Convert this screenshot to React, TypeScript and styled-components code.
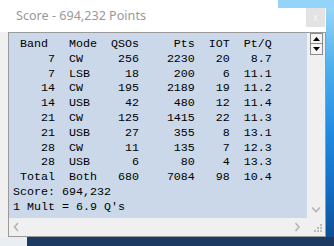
import React from 'react';
import styled, {createGlobalStyle} from "styled-components";

const GlobalStyle = createGlobalStyle`
    html, body {
        margin: 0;
        padding: 0;
        background: #1d3b63;
    }
`

type Line = [string, string, string, string, string, string];

const header: Line = ["Band ", "Mode", "QSOs", "Pts", "IOT", "Pt/Q"];

const rows: Line[] = [
    ["7", "CW", "256", "2230", "20", "8.7"],
    ["7", "LSB", "18", "200", "6", "11.1"],
    ["14", "CW", "195", "2189", "19", "11.2"],
    ["14", "USB", "42", "480", "12", "11.4"],
    ["21", "CW", "125", "1415", "22", "11.3"],
    ["21", "USB", "27", "355", "8", "13.1"],
    ["28", "CW", "11", "135", "7", "12.3"],
    ["28", "USB", "6", "80", "4", "13.3"],
    ["Total", "Both", "680", "7084", "98", "10.4"],
];

const Chevron = ({dir}: { dir: "left" | "right" | "down" }) => {
    const d = dir === "down" ? "M1 1.5 L5 5.5 L9 1.5" : dir === "left" ? "M5 1 L1.5 5 L5 9" : "M1.5 1 L5 5 L1.5 9";
    const w = dir === "down" ? 10 : 7;
    const h = dir === "down" ? 7 : 10;
    return (
        <svg width={w} height={h} viewBox={`0 0 ${w} ${h}`}>
            <path d={d} fill="none" stroke="#b4b4b4" strokeWidth="1.6"/>
        </svg>
    );
};

const Grip = () => (
    <svg width="8" height="8" viewBox="0 0 8 8">
        <rect x="6" y="0" width="2" height="2" fill="#bdbdbd"/>
        <rect x="3" y="3" width="2" height="2" fill="#bdbdbd"/>
        <rect x="6" y="3" width="2" height="2" fill="#bdbdbd"/>
        <rect x="0" y="6" width="2" height="2" fill="#bdbdbd"/>
        <rect x="3" y="6" width="2" height="2" fill="#bdbdbd"/>
        <rect x="6" y="6" width="2" height="2" fill="#bdbdbd"/>
    </svg>
);

const ScoreRow = ({line}: { line: Line }) => (
    <Row>
        <Cell>{line[0]}</Cell>
        <Cell align={"left"} pad={2}>{line[1]}</Cell>
        <Cell>{line[2]}</Cell>
        <Cell>{line[3]}</Cell>
        <Cell>{line[4]}</Cell>
        <Cell>{line[5]}</Cell>
    </Row>
);

export default function App() {
    return (
        <Desktop>
            <GlobalStyle/>
            <TopStrip>
                <BehindWindow/>
                <Sky/>
            </TopStrip>
            <Middle>
                <Window>
                    <TitleBar>
                        <Title>Score - 694,232 Points</Title>
                        <CloseButton>x</CloseButton>
                    </TitleBar>
                    <ListBox>
                        <ListArea>
                            <Content>
                                <ScoreRow line={header}/>
                                {rows.map((r, i) => <ScoreRow key={i} line={r}/>)}
                                <TextLine>Score: 694,232</TextLine>
                                <TextLine>1 Mult = 6.9 Q's</TextLine>
                            </Content>
                            <VScroll>
                                <ArrowStack>
                                    <ArrowButton>
                                        <svg width="7" height="4" viewBox="0 0 7 4"><path d="M0 4 L3.5 0 L7 4 Z" fill="#000"/></svg>
                                    </ArrowButton>
                                    <ArrowButton>
                                        <svg width="7" height="4" viewBox="0 0 7 4"><path d="M0 0 L3.5 4 L7 0 Z" fill="#000"/></svg>
                                    </ArrowButton>
                                </ArrowStack>
                                <ChevronBox><Chevron dir="down"/></ChevronBox>
                            </VScroll>
                        </ListArea>
                        <HScroll>
                            <HTrack>
                                <Chevron dir="left"/>
                                <Chevron dir="right"/>
                            </HTrack>
                            <Corner><Grip/></Corner>
                        </HScroll>
                    </ListBox>
                </Window>
                <SkyEdge/>
            </Middle>
            <BottomStrip>
                <BottomLight/>
                <BottomDark/>
            </BottomStrip>
        </Desktop>
    );
}

const Desktop = styled.div`
    width: 334px;
    height: 246px;
    display: flex;
    flex-direction: column;
    overflow: hidden;
`

const TopStrip = styled.div`
    display: flex;
    height: 8px;
`

const BehindWindow = styled.div`
    width: 278px;
    background: #ffffff;
`

const Sky = styled.div`
    flex: 1;
    background: #93d5f8;
`

const Middle = styled.div`
    display: flex;
    height: 229px;
`

const SkyEdge = styled.div`
    flex: 1;
    background: linear-gradient(180deg, #96d6f8 0%, #4fb0ee 25%, #1f8ae2 55%, #136cc4 80%, #0f4f96 100%);
`

const BottomStrip = styled.div`
    display: flex;
    flex: 1;
`

const BottomLight = styled.div`
    width: 27px;
    background: #e9eef2;
`

const BottomDark = styled.div`
    flex: 1;
    background: #1c3a62;
`

const Window = styled.div`
    width: 326px;
    display: flex;
    flex-direction: column;
    background: #f0f0f0;
`

const TitleBar = styled.div`
    height: 24px;
    display: flex;
    justify-content: space-between;
    align-items: flex-start;
    background: #ffffff;
    padding-left: 16px;
`

const Title = styled.span`
    font-family: "Noto Sans", "Open Sans", sans-serif;
    font-size: 12.6px;
    line-height: 15px;
    color: #999999;
`

const CloseButton = styled.div`
    width: 19px;
    height: 19px;
    margin-right: 1px;
    background: #e3e3e3;
    color: #f6f6f6;
    font-family: "Liberation Sans", sans-serif;
    font-size: 10px;
    display: flex;
    align-items: center;
    justify-content: center;
`

const ListBox = styled.div`
    flex: 1;
    margin-left: 8px;
    border: 1px solid #9a9a9a;
    display: flex;
    flex-direction: column;
`

const ListArea = styled.div`
    height: 185px;
    display: flex;
`

const Content = styled.div`
    width: 298px;
    box-sizing: border-box;
    padding: 4px 0 0 4px;
    background: #cbd8ea;
    font-family: "Liberation Mono", monospace;
    font-size: 11.665px;
    line-height: 14.8px;
    color: #000000;
    white-space: pre;
`

const Row = styled.div`
    display: grid;
    grid-template-columns: 6ch 6ch 6ch 8ch 5ch 6ch;
`

const Cell = styled.span<{ align?: string; pad?: number }>`
    text-align: ${p => p.align || "right"};
    padding-left: ${p => (p.pad || 0)}ch;
`

const TextLine = styled.div``

const VScroll = styled.div`
    flex: 1;
    display: flex;
    flex-direction: column;
    justify-content: space-between;
    background: #f0f0f0;
`

const ArrowStack = styled.div`
    display: flex;
    flex-direction: column;
    width: 13px;
    margin-left: 3px;
`

const ArrowButton = styled.div`
    height: 9px;
    border: 1px solid #8c8c8c;
    background: #f4f4f4;
    display: flex;
    align-items: center;
    justify-content: center;

    & + & {
        border-top: none;
        height: 10px;
    }
`

const ChevronBox = styled.div`
    display: flex;
    justify-content: center;
    padding-bottom: 5px;
`

const HScroll = styled.div`
    flex: 1;
    display: flex;
    background: #f0f0f0;
`

const HTrack = styled.div`
    width: 298px;
    box-sizing: border-box;
    display: flex;
    align-items: center;
    justify-content: space-between;
    padding: 0 6px 0 4px;
`

const Corner = styled.div`
    flex: 1;
    display: flex;
    align-items: flex-end;
    justify-content: flex-end;
    padding: 0 3px 4px 0;
`
